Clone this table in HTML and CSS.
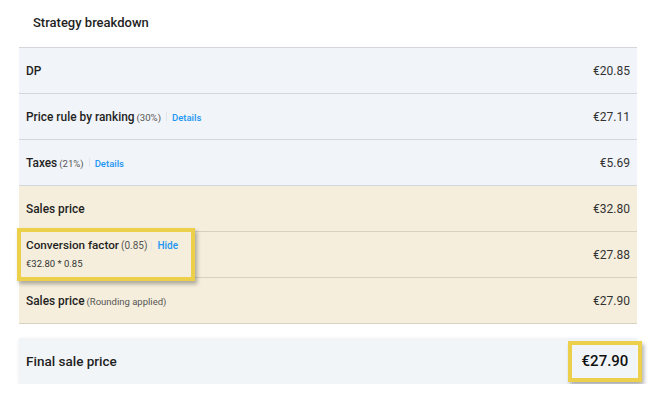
FILE: index.html
```html
<!DOCTYPE html>
<html lang="en">
<head>
  <meta charset="UTF-8">
  <title>Strategy breakdown</title>
  <link rel="stylesheet" href="styles.css">
</head>
<body>
  <div class="panel">
    <h2 class="title">Strategy breakdown</h2>

    <div class="breakdown">
      <div class="row">
        <div class="label"><strong>DP</strong></div>
        <div class="value">€20.85</div>
      </div>
      <div class="row">
        <div class="label"><strong>Price rule by ranking</strong><span class="note">(30%)</span><span class="sep"></span><a class="link" href="#">Details</a></div>
        <div class="value">€27.11</div>
      </div>
      <div class="row">
        <div class="label"><strong>Taxes</strong><span class="note">(21%)</span><span class="sep"></span><a class="link" href="#">Details</a></div>
        <div class="value">€5.69</div>
      </div>
      <div class="row sale">
        <div class="label"><strong>Sales price</strong></div>
        <div class="value">€32.80</div>
      </div>
      <div class="row sale">
        <div class="callout">
          <div class="label"><strong>Conversion factor</strong><span class="note">(0.85)</span><span class="sep"></span><a class="link" href="#">Hide</a></div>
          <div class="formula">€32.80 * 0.85</div>
        </div>
        <div class="value">€27.88</div>
      </div>
      <div class="row sale">
        <div class="label"><strong>Sales price</strong><span class="note small">(Rounding applied)</span></div>
        <div class="value">€27.90</div>
      </div>
    </div>

    <div class="final">
      <div class="final-label">Final sale price</div>
      <div class="final-value">€27.90</div>
    </div>
  </div>
</body>
</html>
```

FILE: styles.css
```css
body {
  margin: 0;
  font-family: Roboto, 'Liberation Sans', sans-serif;
  color: #222;
  background-color: #fff;
}

.panel {
  width: 618px;
  margin-left: 19px;
}

.title {
  margin: 0;
  height: 47px;
  padding-left: 14px;
  line-height: 46px;
  font-size: 13px;
  font-weight: 500;
  color: #1f1f1f;
}

.breakdown {
  border-top: 1px solid #d3d6da;
}

.row {
  display: flex;
  align-items: center;
  justify-content: space-between;
  height: 45px;
  padding: 0 7px;
  background-color: #f1f4f8;
  border-bottom: 1px solid #d3d6da;
}

.row.sale {
  background-color: #f5eedc;
  border-bottom-color: #d8d0c0;
}

.label {
  display: flex;
  align-items: baseline;
  white-space: nowrap;
  font-size: 11.9px;
}

.label strong {
  font-weight: 500;
  color: #1f1f1f;
}

.note {
  margin-left: 2px;
  font-size: 9.6px;
  color: #555;
}

.note.small {
  font-size: 9.5px;
}

.sep {
  align-self: center;
  width: 1px;
  height: 9px;
  margin: 0 5px;
  background-color: #e1e4e8;
}

.link {
  font-size: 9.5px;
  font-weight: 500;
  color: #2196f3;
  text-decoration: none;
}

.callout .label {
  font-size: 11.7px;
}

.callout .note {
  font-size: 10px;
}

.callout .link {
  font-size: 10px;
}

.callout .sep {
  margin: 0 5px 0 4px;
}

.value {
  font-size: 12px;
  color: #333;
}

.callout {
  box-sizing: border-box;
  width: 178px;
  height: 53px;
  margin-left: -9px;
  padding: 6px 5px 0;
  border: 4px solid #ecd04c;
  box-shadow: 2px 3px 4px rgba(0, 0, 0, 0.3);
}

.formula {
  margin-top: 6px;
  font-size: 9.5px;
  color: #333;
}

.final {
  display: flex;
  align-items: center;
  justify-content: space-between;
  height: 46px;
  margin-top: 14px;
  padding-left: 7px;
  background-color: #f2f5f8;
  box-shadow: 0 1px 4px rgba(0, 0, 0, 0.08);
}

.final-label {
  font-size: 13.5px;
  font-weight: 500;
  color: #1f1f1f;
}

.final-value {
  box-sizing: border-box;
  width: 74px;
  height: 41px;
  margin-right: -5px;
  line-height: 33px;
  text-align: center;
  border: 4px solid #ecd04c;
  font-size: 15px;
  font-weight: 500;
  color: #111;
  box-shadow: 2px 3px 4px rgba(0, 0, 0, 0.3);
}
```
